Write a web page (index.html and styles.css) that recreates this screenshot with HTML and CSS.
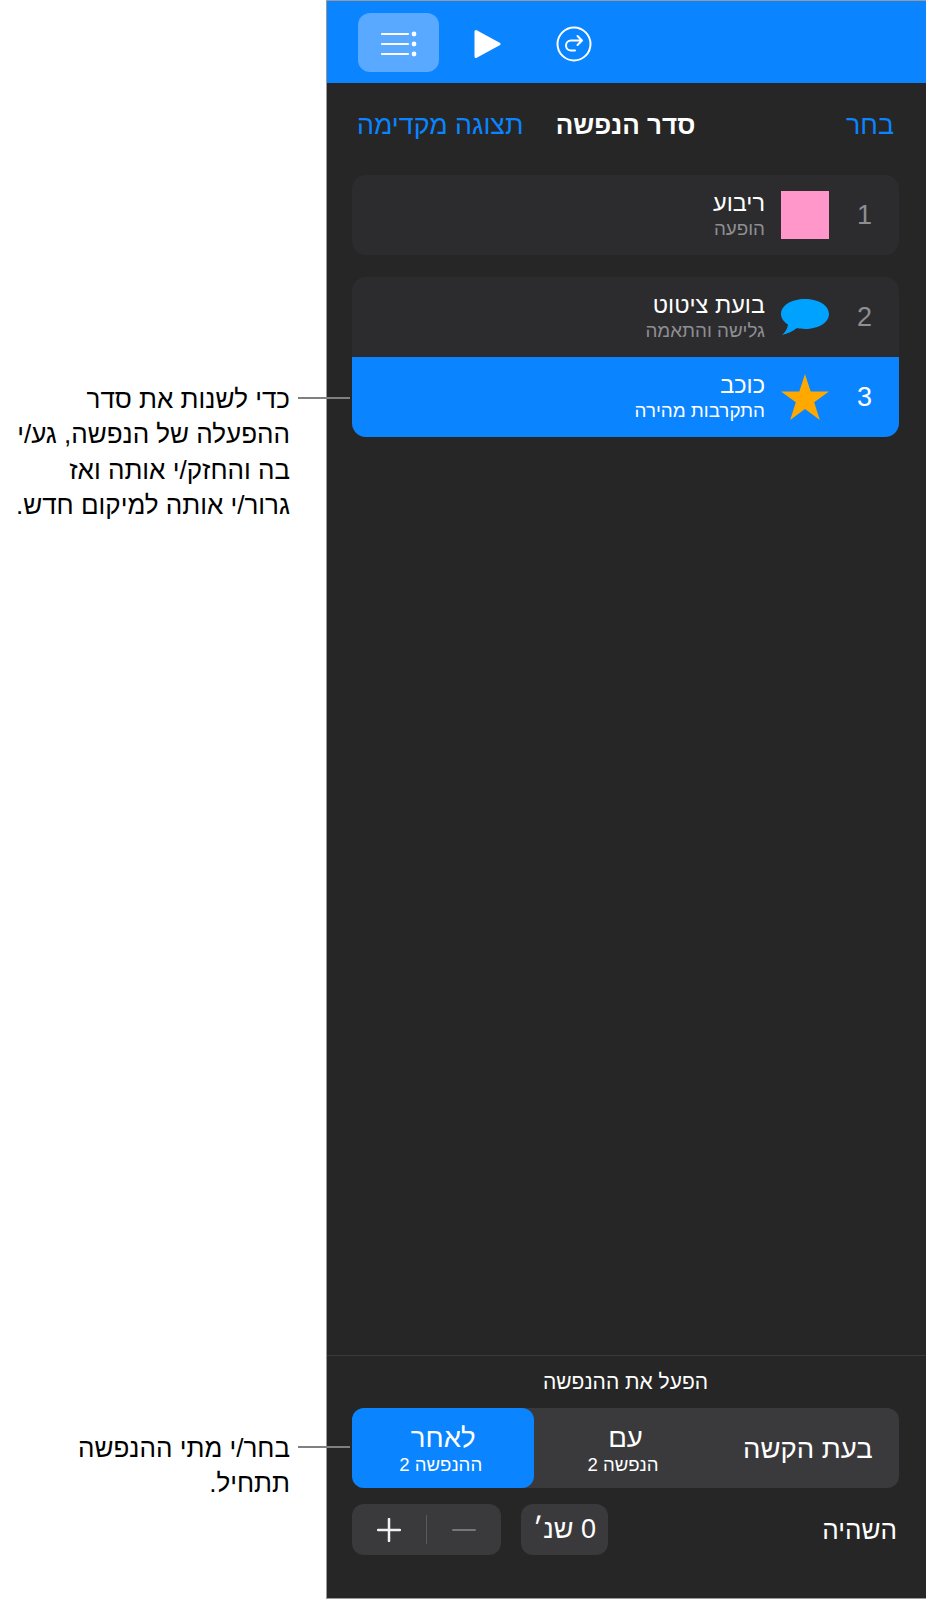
FILE: index.html
```html
<!DOCTYPE html>
<html lang="he" dir="rtl">
<head>
  <meta charset="UTF-8">
  <title>סדר הנפשה</title>
  <link rel="stylesheet" href="styles.css">
</head>
<body>

<div class="panel">
  <div class="toolbar">
    <button class="tool tool-active" type="button">
      <svg width="40" height="26" viewBox="0 0 40 26">
        <path d="M3 3h26M3 13h26M3 23h26" stroke="#fff" stroke-width="2.200" stroke-linecap="round" fill="none"/>
        <circle cx="35" cy="3" r="2.400" fill="#fff"/>
        <circle cx="35" cy="13" r="2.400" fill="#fff"/>
        <circle cx="35" cy="23" r="2.400" fill="#fff"/>
      </svg>
    </button>
    <button class="tool" type="button">
      <svg width="28" height="32" viewBox="0 0 28 32">
        <path d="M3 3.500 26 16 3 28.500z" fill="#fff" stroke="#fff" stroke-width="3" stroke-linejoin="round"/>
      </svg>
    </button>
    <button class="tool tool-share" type="button">
      <svg width="36" height="36" viewBox="0 0 36 36">
        <circle cx="18" cy="18" r="16.500" stroke="#fff" stroke-width="2" fill="none"/>
        <path d="M25.500 14.500H15a5 5 0 0 0 0 10h4M21.500 10l4.500 4.500-4.500 4.500" stroke="#fff" stroke-width="2" stroke-linecap="round" stroke-linejoin="round" fill="none"/>
      </svg>
    </button>
  </div>

  <div class="nav">
    <a class="nav-link">בחר</a>
    <div class="nav-title">סדר הנפשה</div>
    <a class="nav-link nav-left">תצוגה מקדימה</a>
  </div>

  <div class="group">
    <div class="row">
      <div class="row-num">1</div>
      <div class="row-icon"><div class="swatch"></div></div>
      <div>
        <div class="row-title">ריבוע</div>
        <div class="row-sub">הופעה</div>
      </div>
    </div>
  </div>

  <div class="group">
    <div class="row">
      <div class="row-num">2</div>
      <div class="row-icon">
        <svg width="48" height="36" viewBox="0 0 48 36">
          <path d="M24 0C37.500 0 48 6.500 48 15S37.500 30 24 30c-3 0-5.500-.3-8-.9C12 32 6.500 35 1 36c3-2.500 5.500-6 6-10.500C2.500 22.800 0 19 0 15 0 6.500 10.500 0 24 0z" fill="#00a2ff"/>
        </svg>
      </div>
      <div>
        <div class="row-title">בועת ציטוט</div>
        <div class="row-sub">גלישה והתאמה</div>
      </div>
    </div>
    <div class="row row-selected">
      <div class="row-num">3</div>
      <div class="row-icon">
        <svg width="48" height="46" viewBox="0 0 48 46">
          <path d="M24 0l5.700 17.500H48L33.200 28.300 38.800 46 24 35.100 9.200 46l5.600-17.700L0 17.500h18.300z" fill="#ffa800"/>
        </svg>
      </div>
      <div>
        <div class="row-title">כוכב</div>
        <div class="row-sub">התקרבות מהירה</div>
      </div>
    </div>
  </div>

  <div class="spacer"></div>

  <div class="build">
    <div class="build-title">הפעל את ההנפשה</div>
    <div class="segments">
      <div class="segment">
        <div class="seg-main">בעת הקשה</div>
      </div>
      <div class="segment">
        <div class="seg-main">עם</div>
        <div class="seg-sub">הנפשה 2</div>
      </div>
      <div class="segment segment-on">
        <div class="seg-main">לאחר</div>
        <div class="seg-sub">ההנפשה 2</div>
      </div>
    </div>
    <div class="delay">
      <div class="delay-label">השהיה</div>
      <div class="delay-value">0 שנ׳</div>
      <div class="stepper">
        <svg width="24" height="4" viewBox="0 0 24 4"><path d="M1 2h22" stroke="#77777b" stroke-width="2" stroke-linecap="round"/></svg>
        <div class="stepper-line"></div>
        <svg width="24" height="24" viewBox="0 0 24 24"><path d="M1 12h22M12 1v22" stroke="#f2f2f2" stroke-width="2.500" stroke-linecap="round"/></svg>
      </div>
    </div>
  </div>
</div>

<div class="notes">
  <div class="note note-order">
    כדי לשנות את סדר<br>ההפעלה של הנפשה, גע/י<br>בה והחזק/י אותה ואז<br>גרור/י אותה למיקום חדש.
    <span class="leader"></span>
  </div>
  <div class="note note-start">
    בחר/י מתי ההנפשה<br>תתחיל.
    <span class="leader"></span>
  </div>
</div>

</body>
</html>
```

FILE: styles.css
```css
* {
  box-sizing: border-box;
}

body {
  margin: 0;
  height: 1599px;
  display: flex;
  background: #fff;
  font-family: "Liberation Sans", sans-serif;
  color: #000;
  overflow: hidden;
}

.panel {
  width: 600px;
  height: 1599px;
  display: flex;
  flex-direction: column;
  background: #262626;
  border: 1px solid #9a9a9a;
  border-right: none;
  color: #fff;
}

.toolbar {
  direction: ltr;
  height: 82px;
  flex: none;
  display: flex;
  align-items: center;
  gap: 18px;
  padding: 1px 0 0 31px;
  background: #0a84ff;
}

.tool {
  width: 60px;
  height: 59px;
  padding: 2px 0 0;
  display: flex;
  align-items: center;
  justify-content: center;
  background: none;
  border: none;
  border-radius: 12px;
}

.tool-active {
  width: 81px;
  background: #58a9ff;
}

.tool-share {
  margin-left: 9px;
}

.nav {
  display: grid;
  grid-template-columns: 1fr auto 1fr;
  align-items: center;
  height: 84px;
  padding: 0 32px 0 30px;
  font-size: 26.800px;
}

.nav-link {
  color: #0a84ff;
}

.nav-left {
  text-align: left;
}

.nav-title {
  font-size: 26px;
  font-weight: bold;
}

.group {
  margin: 8px 27px 14px 25px;
  border-radius: 14px;
  overflow: hidden;
  background: #2c2c2e;
}

.row {
  height: 80px;
  display: flex;
  align-items: center;
}

.row-selected {
  background: #0a84ff;
}

.row-num {
  width: 70px;
  padding-left: 1px;
  text-align: center;
  font-size: 27px;
  color: #8e8e93;
}

.row-selected .row-num {
  color: #fff;
}

.row-icon {
  width: 48px;
  margin-left: 16px;
  display: flex;
}

.swatch {
  width: 48px;
  height: 48px;
  background: #ff97cb;
}

.row-title {
  font-size: 23.500px;
  line-height: 28px;
}

.row-sub {
  font-size: 18.800px;
  line-height: 24px;
  color: #8e8e93;
}

.row-selected .row-sub {
  color: #fff;
}

.spacer {
  flex: 1;
}

.build {
  border-top: 1px solid #3a3a3c;
  padding: 0 27px 43px 25px;
  flex: none;
}

.build-title {
  text-align: center;
  font-size: 21px;
  line-height: 52px;
}

.segments {
  display: grid;
  grid-template-columns: repeat(3, 1fr);
  height: 80px;
  border-radius: 12px;
  background: #3a3a3c;
}

.segment {
  display: flex;
  flex-direction: column;
  align-items: center;
  justify-content: center;
  border-radius: 12px;
}

.segment-on {
  background: #0a84ff;
}

.seg-main {
  font-size: 27.500px;
  line-height: 33px;
}

.seg-sub {
  padding-right: 5px;
  font-size: 18.600px;
  line-height: 22px;
}

.delay {
  display: flex;
  align-items: center;
  margin-top: 16px;
  height: 51px;
}

.delay-label {
  flex: 1;
  padding: 2px 2px 0 0;
  font-size: 26px;
}

.delay-value {
  width: 87px;
  height: 51px;
  margin-left: 20px;
  display: flex;
  align-items: center;
  justify-content: center;
  border-radius: 12px;
  background: #3a3a3c;
  font-size: 27px;
}

.stepper {
  width: 149px;
  height: 51px;
  display: flex;
  align-items: center;
  justify-content: space-around;
  padding: 0 13px;
  border-radius: 12px;
  background: #3a3a3c;
}

.stepper-line {
  width: 1px;
  height: 29px;
  background: #5a5a5e;
}

.notes {
  width: 326px;
  position: relative;
}

.note {
  position: absolute;
  right: 36px;
  white-space: nowrap;
  font-size: 26px;
  line-height: 35.300px;
}

.note-order {
  top: 382px;
}

.note-start {
  top: 1431px;
}

.leader {
  position: absolute;
  top: 15px;
  right: -60px;
  width: 52px;
  height: 2px;
  background: #808080;
}
```
